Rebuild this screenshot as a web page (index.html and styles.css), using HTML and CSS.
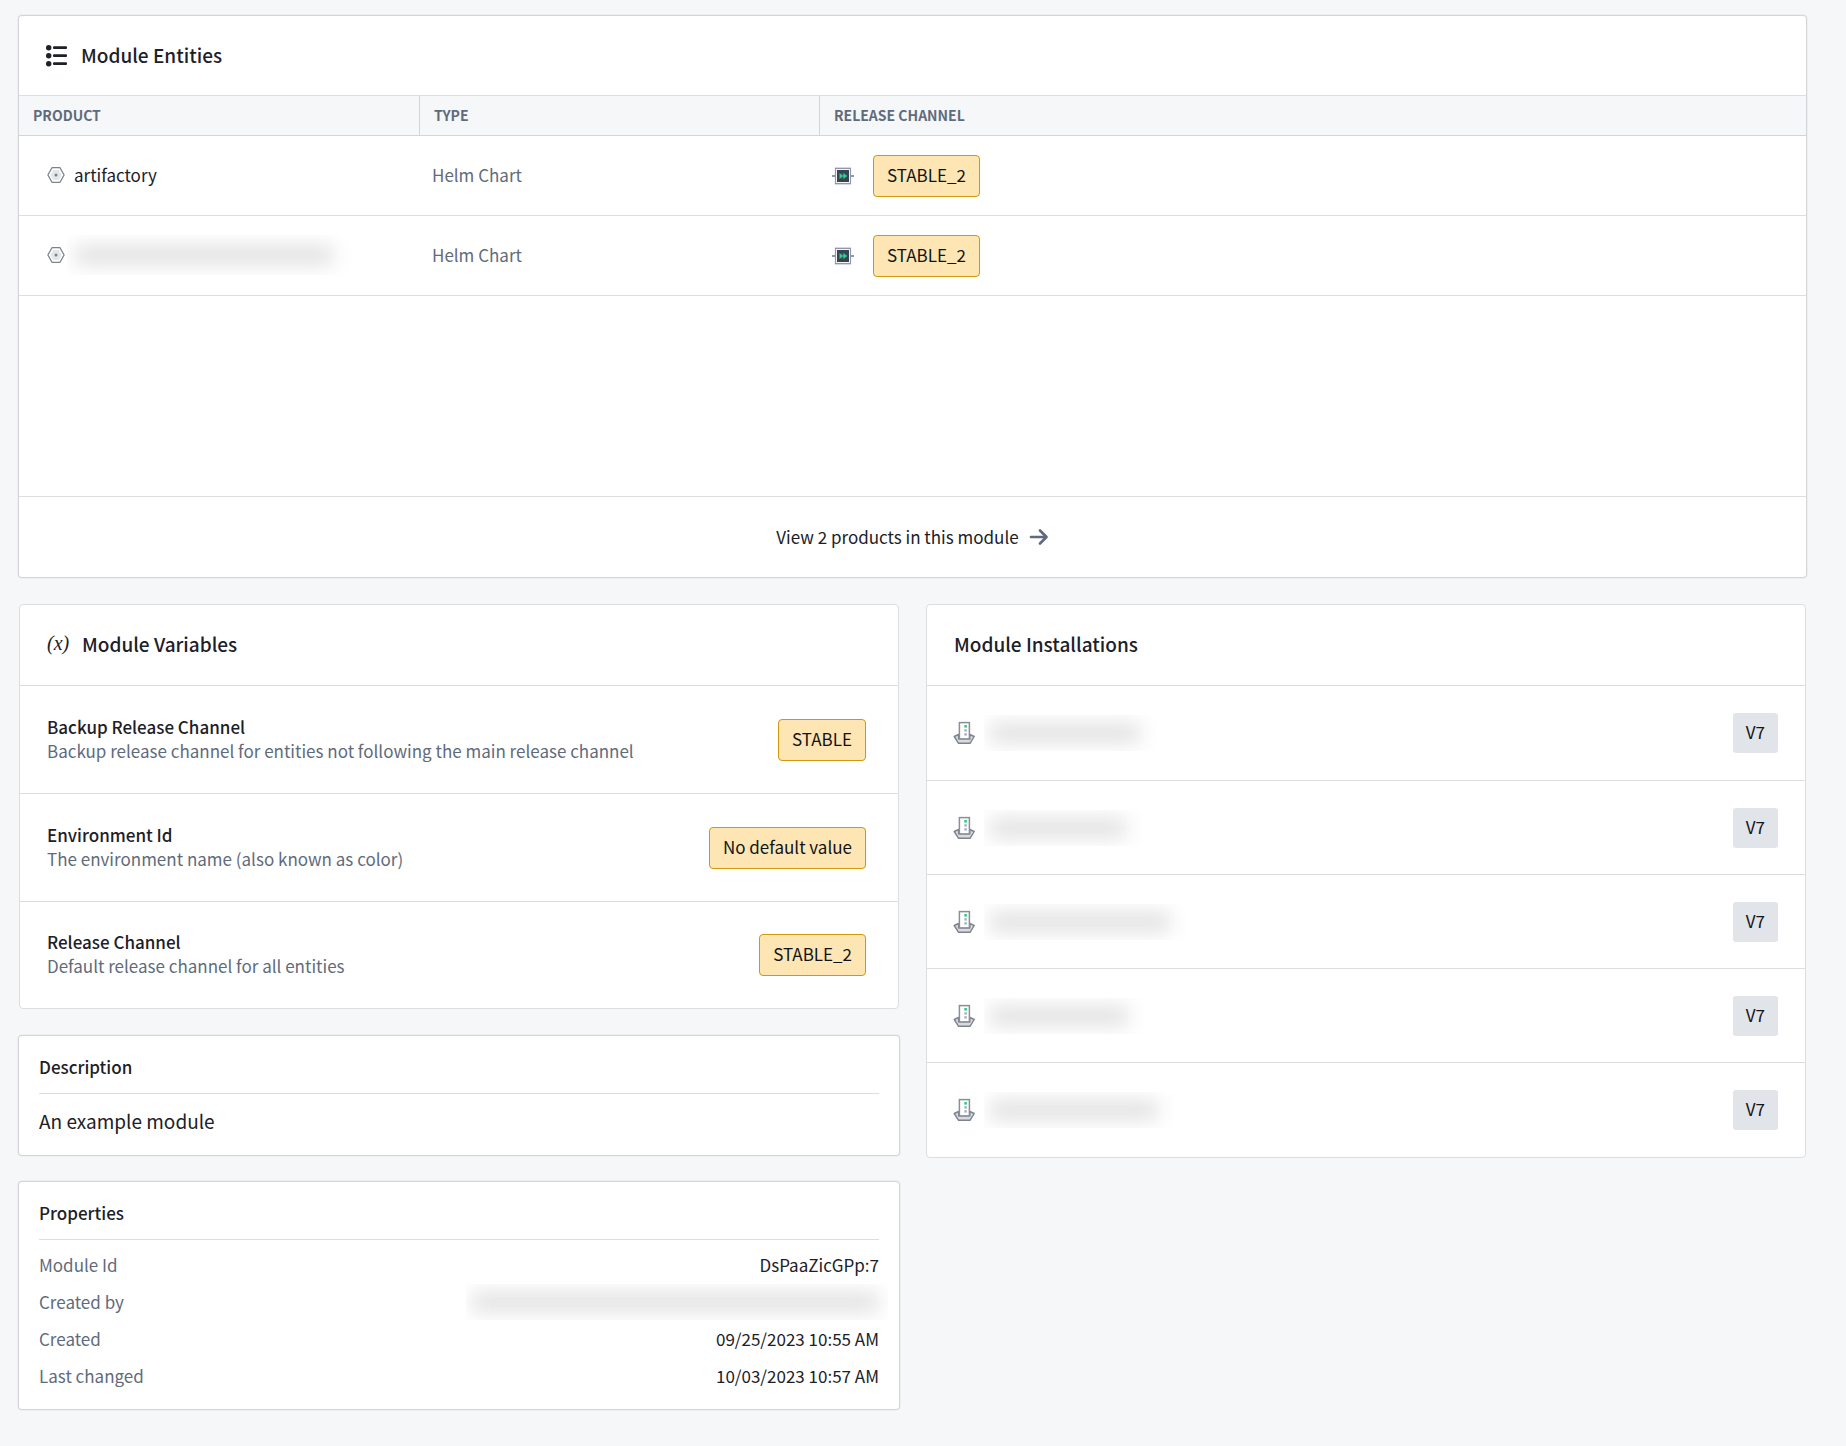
FILE: index.html
```html
<!DOCTYPE html>
<html lang="en">
<head>
<meta charset="utf-8">
<title>Module overview</title>
<link rel="stylesheet" href="styles.css">
</head>
<body>
<svg class="defs" aria-hidden="true">
  <symbol id="hexagon" viewBox="0 0 20 20">
    <path d="M6 2.7h8L18.1 10 14 17.3H6L1.9 10z" fill="#fff" stroke="#7d828b" stroke-width="1.3" stroke-linejoin="round"/>
    <path d="M7.2 5h5.6l2.8 5-2.8 5H7.2L4.4 10z" fill="#e4e6ea"/>
    <circle cx="10" cy="10" r="1.5" fill="#7d828b"/>
  </symbol>
  <symbol id="channel" viewBox="0 0 22 18">
    <path d="M0 9h3M19 9h3" stroke="#8f98a6" stroke-width="2"/>
    <path d="M3 .8h16M3 17.2h16" stroke="#ccd1da" stroke-width="1"/>
    <rect x="3.5" y="1.5" width="15" height="15" fill="#fff" stroke="#8f98a6" stroke-width="1.2"/>
    <rect x="5" y="3" width="12" height="12" fill="#394452"/>
    <path d="M7.5 6l4 3-4 3zM11.3 6l4 3-4 3z" fill="#32cc8f"/>
  </symbol>
  <symbol id="ship" viewBox="0 0 22 24">
    <path d="M1.2 15.5l4.4-2v4.4h11.2v-4.4l4.4 2-4.2 6.8H5.6z" fill="#d8dce2" stroke="#7d828b" stroke-width="1.4" stroke-linejoin="round"/>
    <rect x="6.4" y="1.6" width="10" height="16.3" fill="#fff" stroke="#8a8e96" stroke-width="1.5"/>
    <rect x="11.3" y="4" width="2.6" height="2.6" fill="#32cc84"/>
    <rect x="11.3" y="8.2" width="2.6" height="2.4" fill="#a9b3c3"/>
    <rect x="11.3" y="12.2" width="2.6" height="2.4" fill="#a9b3c3"/>
  </symbol>
</svg>

<main class="page">
  <section class="card raised">
    <header class="card-header">
      <svg class="list-icon" viewBox="0 0 22 22" aria-hidden="true" fill="#1c2127">
        <circle cx="2.7" cy="2.7" r="2.7"/><circle cx="2.7" cy="10.7" r="2.7"/><circle cx="2.7" cy="18.7" r="2.7"/>
        <rect x="7" y="1.3" width="14" height="2.7" rx="1"/><rect x="7" y="9.3" width="14" height="2.7" rx="1"/><rect x="7" y="17.3" width="14" height="2.7" rx="1"/>
      </svg>
      <h2>Module Entities</h2>
    </header>
    <div class="table-area">
      <table>
        <colgroup><col class="col-product"><col class="col-type"><col></colgroup>
        <thead>
          <tr><th scope="col">PRODUCT</th><th scope="col">TYPE</th><th scope="col">RELEASE CHANNEL</th></tr>
        </thead>
        <tbody>
          <tr>
            <td><div class="product"><svg class="hex"><use href="#hexagon"/></svg><span>artifactory</span></div></td>
            <td class="type">Helm Chart</td>
            <td><div class="channel"><svg class="chan"><use href="#channel"/></svg><span class="tag">STABLE_2</span></div></td>
          </tr>
          <tr>
            <td><div class="product"><svg class="hex"><use href="#hexagon"/></svg><span class="redacted product-name"></span></div></td>
            <td class="type">Helm Chart</td>
            <td><div class="channel"><svg class="chan"><use href="#channel"/></svg><span class="tag">STABLE_2</span></div></td>
          </tr>
        </tbody>
      </table>
    </div>
    <a class="view-all" href="#products">View 2 products in this module
      <svg class="arrow" viewBox="0 0 20 18" aria-hidden="true"><path d="M2 9h15M11 2.5L17.5 9 11 15.5" fill="none" stroke="#5f6b7c" stroke-width="2.7" stroke-linecap="round" stroke-linejoin="round"/></svg>
    </a>
  </section>

  <div class="columns">
    <div class="column">
      <section class="card outlined">
        <header class="card-header">
          <span class="var-icon" aria-hidden="true">(x)</span>
          <h2>Module Variables</h2>
        </header>
        <ul class="variables">
          <li><div><h3>Backup Release Channel</h3><p>Backup release channel for entities not following the main release channel</p></div><span class="tag">STABLE</span></li>
          <li><div><h3>Environment Id</h3><p>The environment name (also known as color)</p></div><span class="tag">No default value</span></li>
          <li><div><h3>Release Channel</h3><p>Default release channel for all entities</p></div><span class="tag">STABLE_2</span></li>
        </ul>
      </section>

      <section class="card raised details">
        <h3>Description</h3>
        <p class="description">An example module</p>
      </section>

      <section class="card raised details">
        <h3>Properties</h3>
        <dl>
          <div><dt>Module Id</dt><dd>DsPaaZicGPp:7</dd></div>
          <div><dt>Created by</dt><dd class="redacted creator"></dd></div>
          <div><dt>Created</dt><dd>09/25/2023 10:55 AM</dd></div>
          <div><dt>Last changed</dt><dd>10/03/2023 10:57 AM</dd></div>
        </dl>
      </section>
    </div>

    <section class="card outlined">
      <header class="card-header"><h2>Module Installations</h2></header>
      <ul class="installations">
        <li><svg class="ship"><use href="#ship"/></svg><span class="redacted" style="width:172px"></span><span class="version">V7</span></li>
        <li><svg class="ship"><use href="#ship"/></svg><span class="redacted" style="width:158px"></span><span class="version">V7</span></li>
        <li><svg class="ship"><use href="#ship"/></svg><span class="redacted" style="width:202px"></span><span class="version">V7</span></li>
        <li><svg class="ship"><use href="#ship"/></svg><span class="redacted" style="width:160px"></span><span class="version">V7</span></li>
        <li><svg class="ship"><use href="#ship"/></svg><span class="redacted" style="width:190px"></span><span class="version">V7</span></li>
      </ul>
    </section>
  </div>
</main>
</body>
</html>
```
FILE: styles.css
```css
* { box-sizing: border-box; }

body {
  margin: 0;
  background: #f6f7f9;
  color: #1c2127;
  font: 17px/24px "Noto Sans CJK SC", "Noto Sans", sans-serif;
}

h2, h3, p, ul, dl, dd { margin: 0; padding: 0; }
ul { list-style: none; }
svg { display: block; flex: none; }
.defs { position: absolute; width: 0; height: 0; }

h2 { padding-bottom: 2px; font-size: 19px; font-weight: 500; line-height: 24px; }
h3 { font-size: 17px; font-weight: 500; line-height: 24px; }

.page {
  display: flex;
  flex-direction: column;
  gap: 27px;
  padding: 16px 40px 36px 19px;
}

.columns {
  display: grid;
  grid-template-columns: 1fr 1fr;
  gap: 27px;
  align-items: start;
}
.column { display: flex; flex-direction: column; gap: 27px; min-width: 0; }

.card { background: #fff; border-radius: 3px; }
.raised { box-shadow: 0 0 0 1px #d3d5d8, 0 0 0 2px #eeeff1; }
.outlined { border: 1px solid #dcdee0; border-radius: 4px; }

.card-header {
  display: flex;
  align-items: center;
  gap: 13px;
  height: 80px;
  padding: 0 27px;
  border-bottom: 1px solid #dcdee0;
}
.outlined .card-header { height: 81px; }
.list-icon { width: 22px; height: 22px; }
.var-icon {
  width: 22px;
  padding-bottom: 4px;
  font: italic 20px/24px "Liberation Serif", serif;
}

/* Entities table */
.table-area { height: 401px; border-bottom: 1px solid #dcdee0; }
table { width: 100%; border-collapse: separate; border-spacing: 0; table-layout: fixed; }
.col-product { width: 401px; }
.col-type { width: 400px; }
th {
  height: 40px;
  padding: 0 14px 2px;
  background: #f6f7f9;
  border-bottom: 1px solid #d3d5d8;
  color: #5f6b7c;
  font-size: 14px;
  font-weight: 700;
  line-height: 20px;
  text-align: left;
}
th:not(:last-child) { border-right: 1px solid #d3d5d8; }
td { height: 80px; padding: 0 12px; border-bottom: 1px solid #dcdee0; }
td.type { padding-bottom: 2px; color: #5f6b7c; }
.product { display: flex; align-items: center; gap: 8px; padding: 0 0 2px 15px; }
.hex { width: 20px; height: 20px; }
.channel { display: flex; align-items: center; gap: 19px; }
.chan { width: 22px; height: 18px; }

.tag {
  flex: none;
  padding: 7px 13px 9px;
  background: #fde6b3;
  border: 1px solid #d1980b;
  border-radius: 4px;
  color: #111418;
}

.view-all {
  display: flex;
  align-items: center;
  justify-content: center;
  gap: 10px;
  height: 80px;
  padding-bottom: 1px;
  color: inherit;
  text-decoration: none;
}
.arrow { width: 20px; height: 18px; }

/* Variables */
.variables li {
  display: flex;
  align-items: center;
  justify-content: space-between;
  gap: 16px;
  height: 108px;
  padding: 0 32px 0 27px;
  border-bottom: 1px solid #dcdee0;
}
.variables li:last-child { border-bottom: 0; height: 106px; }
.variables div { padding-bottom: 2px; }
.variables p { color: #5f6b7c; }

/* Installations */
.installations { display: grid; grid-template-rows: 95px; grid-auto-rows: 1fr; height: 471px; }
.installations li {
  display: flex;
  align-items: center;
  padding: 0 27px 0 26px;
  border-bottom: 1px solid #dcdee0;
}
.installations li:last-child { border-bottom: 0; }
.ship { width: 22px; height: 24px; margin-right: 9px; }
.version {
  margin-left: auto;
  padding: 7px 13px 9px;
  background: #e1e4e8;
  border-radius: 3px;
  color: #111418;
}

/* Hidden names: a blurred bar clipped to its box */
.redacted { display: block; height: 36px; padding: 9px 16px 9px 6px; overflow: hidden; }
.redacted::before {
  content: "";
  display: block;
  height: 100%;
  background: #dedede;
  filter: blur(10px);
}
.product-name { width: 286px; margin-left: -7px; height: 40px; padding: 11px 20px 11px 8px; }

/* Description and properties */
.details { padding: 19px 20px 12px; }
.details h3 { padding-bottom: 14px; border-bottom: 1px solid #dcdee0; }
.description { padding: 15px 0 10px; font-size: 19px; line-height: 24px; }
dl { padding: 6px 0 3px; }
dl div { display: flex; align-items: center; justify-content: space-between; height: 37px; }
dt { color: #5f6b7c; }
dl .creator { width: 422px; margin-right: -9px; padding-right: 9px; }
```
